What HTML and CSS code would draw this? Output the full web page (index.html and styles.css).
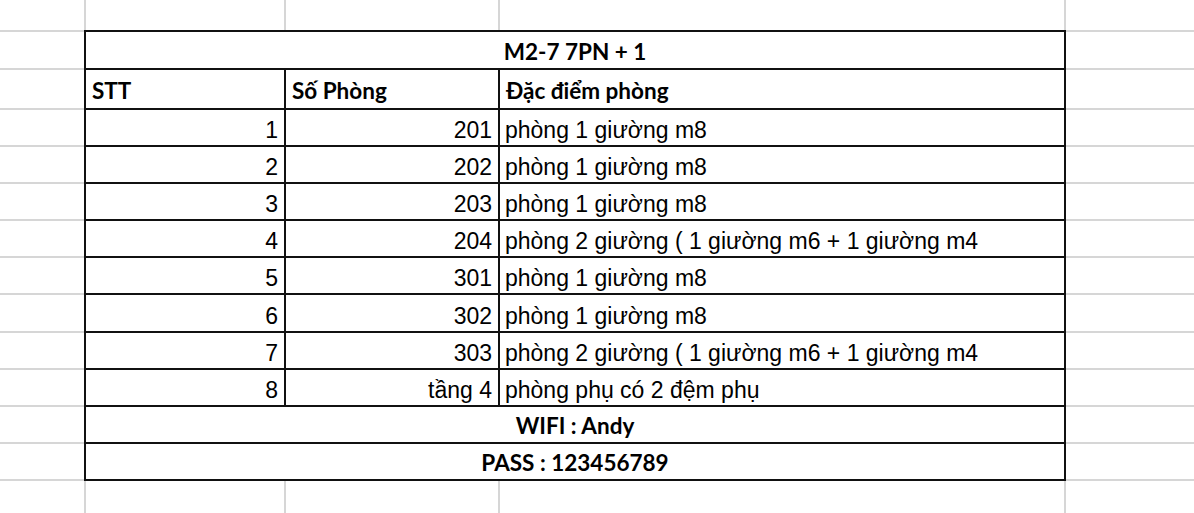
FILE: index.html
```html
<!DOCTYPE html>
<html lang="vi">
<head>
<meta charset="utf-8">
<title>M2-7 7PN + 1</title>
<link rel="stylesheet" href="styles.css">
</head>
<body>
<div class="sheet">
  <div class="table">
    <div class="cell head span3 center">M2-7 7PN + 1</div>

    <div class="cell head tall">STT</div>
    <div class="cell head tall">Số Phòng</div>
    <div class="cell head tall">Đặc điểm phòng</div>

    <div class="cell num">1</div><div class="cell num">201</div><div class="cell txt">phòng 1 giường m8</div>
    <div class="cell num">2</div><div class="cell num">202</div><div class="cell txt">phòng 1 giường m8</div>
    <div class="cell num">3</div><div class="cell num">203</div><div class="cell txt">phòng 1 giường m8</div>
    <div class="cell num">4</div><div class="cell num">204</div><div class="cell txt">phòng 2 giường ( 1 giường m6 + 1 giường m4</div>
    <div class="cell num">5</div><div class="cell num">301</div><div class="cell txt">phòng 1 giường m8</div>
    <div class="cell num">6</div><div class="cell num">302</div><div class="cell txt">phòng 1 giường m8</div>
    <div class="cell num">7</div><div class="cell num">303</div><div class="cell txt">phòng 2 giường ( 1 giường m6 + 1 giường m4</div>
    <div class="cell num">8</div><div class="cell num">tầng 4</div><div class="cell txt">phòng phụ có 2 đệm phụ</div>

    <div class="cell head span3 center">WIFI : Andy</div>
    <div class="cell head span3 center">PASS : 123456789</div>
  </div>
</div>
</body>
</html>
```

FILE: styles.css
```css
html, body {
  margin: 0;
  padding: 0;
  background: #ffffff;
}

.sheet {
  width: 1194px;
  height: 513px;
  overflow: hidden;
  padding-top: 30px;
  box-sizing: border-box;
  --g: #d6d6d6;
  background:
    linear-gradient(var(--g), var(--g)) 84px 0 / 2px 100% no-repeat,
    linear-gradient(var(--g), var(--g)) 284px 0 / 2px 100% no-repeat,
    linear-gradient(var(--g), var(--g)) 498px 0 / 2px 100% no-repeat,
    linear-gradient(var(--g), var(--g)) 1064px 0 / 2px 100% no-repeat,
    linear-gradient(var(--g), var(--g)) 0 30px / 100% 2px no-repeat,
    linear-gradient(var(--g), var(--g)) 0 68px / 100% 2px no-repeat,
    linear-gradient(var(--g), var(--g)) 0 108px / 100% 2px no-repeat,
    linear-gradient(var(--g), var(--g)) 0 145px / 100% 2px no-repeat,
    linear-gradient(var(--g), var(--g)) 0 182px / 100% 2px no-repeat,
    linear-gradient(var(--g), var(--g)) 0 219px / 100% 2px no-repeat,
    linear-gradient(var(--g), var(--g)) 0 256px / 100% 2px no-repeat,
    linear-gradient(var(--g), var(--g)) 0 293px / 100% 2px no-repeat,
    linear-gradient(var(--g), var(--g)) 0 331px / 100% 2px no-repeat,
    linear-gradient(var(--g), var(--g)) 0 368px / 100% 2px no-repeat,
    linear-gradient(var(--g), var(--g)) 0 405px / 100% 2px no-repeat,
    linear-gradient(var(--g), var(--g)) 0 442px / 100% 2px no-repeat,
    linear-gradient(var(--g), var(--g)) 0 479px / 100% 2px no-repeat,
    #ffffff;
}

.table {
  margin-left: 84px;
  width: 982px;
  box-sizing: border-box;
  display: grid;
  grid-template-columns: 200px 214px 566px;
  grid-template-rows: 38px 40px 37px 37px 37px 37px 37px 38px 37px 37px 37px 37px;
  border-left: 2px solid #111;
  border-top: 2px solid #111;
  background: #ffffff;
  color: #000;
}

.cell {
  box-sizing: border-box;
  border-right: 2px solid #111;
  border-bottom: 2px solid #111;
  display: flex;
  align-items: flex-end;
  white-space: nowrap;
  overflow: hidden;
}

.span3 {
  grid-column: 1 / 4;
}

.head {
  font-family: "Lato", "Open Sans", sans-serif;
  font-weight: 700;
  font-size: 22.5px;
  line-height: 1;
  padding: 0 6px 5px;
}

.head.tall {
  padding-bottom: 6px;
}

.center {
  justify-content: center;
}

.num, .txt {
  font-family: "Liberation Sans", Arial, sans-serif;
  font-size: 23px;
  line-height: 1;
  padding-bottom: 3px;
}

.num {
  justify-content: flex-end;
  padding-right: 6px;
}

.txt {
  padding-left: 5px;
}
```
